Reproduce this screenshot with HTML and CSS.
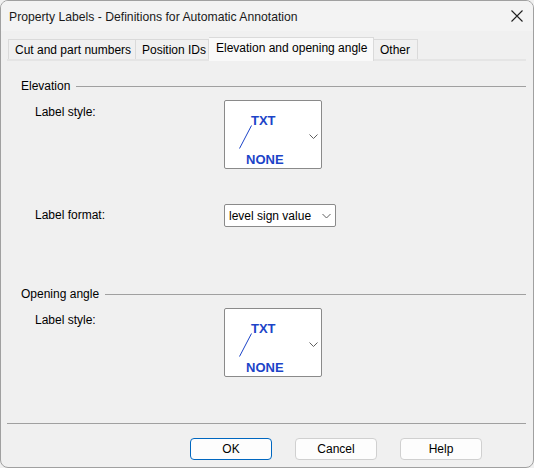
FILE: index.html
```html
<!DOCTYPE html>
<html>
<head>
<meta charset="utf-8">
<link rel="stylesheet" href="styles.css">
</head>
<body>
<div class="window">
  <div class="titlebar">
    <span class="title">Property Labels - Definitions for Automatic Annotation</span>
    <svg class="close" width="12" height="12" viewBox="0 0 12 12"><path d="M0.5 0.5 L11.5 11.5 M11.5 0.5 L0.5 11.5" stroke="#202020" stroke-width="1.1" fill="none"/></svg>
  </div>
  <div class="tabstrip">
    <div class="tab t1">Cut and part numbers</div>
    <div class="tab t2">Position IDs</div>
    <div class="tab t3 selected">Elevation and opening angle</div>
    <div class="tab t4">Other</div>
  </div>
  <div class="panel">
    <div class="group-head first"><span>Elevation</span><div class="rule"></div></div>
    <div class="row">
      <div class="label big">Label style:</div>
      <div class="combo-big">
        <svg width="96" height="67" viewBox="0 0 96 67">
          <text x="26" y="24" class="pv">TXT</text>
          <line x1="26.5" y1="24.5" x2="14.5" y2="47.5" stroke="#1c44c8" stroke-width="1"/>
          <text x="21" y="62.5" class="pv">NONE</text>
          <path d="M84.5 33.5 L88.5 37.5 L92.5 33.5" stroke="#606060" stroke-width="1" fill="none"/>
        </svg>
      </div>
    </div>
    <div class="row format">
      <div class="label">Label format:</div>
      <div class="combo-small">
        <span>level sign value</span>
        <svg width="9" height="6" viewBox="0 0 9 6"><path d="M0.5 1 L4.5 5 L8.5 1" stroke="#606060" stroke-width="1" fill="none"/></svg>
      </div>
    </div>
    <div class="group-head second"><span>Opening angle</span><div class="rule"></div></div>
    <div class="row">
      <div class="label big">Label style:</div>
      <div class="combo-big">
        <svg width="96" height="67" viewBox="0 0 96 67">
          <text x="26" y="24" class="pv">TXT</text>
          <line x1="26.5" y1="24.5" x2="14.5" y2="47.5" stroke="#1c44c8" stroke-width="1"/>
          <text x="21" y="62.5" class="pv">NONE</text>
          <path d="M84.5 33.5 L88.5 37.5 L92.5 33.5" stroke="#606060" stroke-width="1" fill="none"/>
        </svg>
      </div>
    </div>
  </div>
  <div class="footer">
    <div class="separator"></div>
    <div class="buttons">
      <div class="btn default">OK</div>
      <div class="btn">Cancel</div>
      <div class="btn">Help</div>
    </div>
  </div>
</div>
</body>
</html>
```
FILE: styles.css
```css
html, body {
  margin: 0;
  padding: 0;
  background: #f0f0f0;
}
.window {
  box-sizing: border-box;
  width: 534px;
  height: 468px;
  border: 1px solid #a0a0a0;
  border-radius: 8px;
  background: #f0f0f0;
  display: flex;
  flex-direction: column;
  overflow: hidden;
  font-family: "Liberation Sans", Arial, sans-serif;
  font-size: 12px;
  color: #000;
}
.titlebar {
  height: 30px;
  flex: none;
  display: flex;
  align-items: center;
  justify-content: space-between;
  padding: 0 10px 0 8px;
  background: #f3f3f3;
}
.title {
  color: #1a1a1a;
  font-size: 12.2px;
  margin-top: 1px;
}
.close {
  display: block;
}
.tabstrip {
  flex: none;
  display: flex;
  align-items: flex-end;
  margin: 6px 7px 0 6px;
  padding-left: 1px;
  border-bottom: 2px solid #e5e5e5;
  height: 22px;
}
.tab {
  box-sizing: border-box;
  height: 20px;
  line-height: 20px;
  border: 1px solid #dadada;
  border-bottom: none;
  border-left: none;
  padding: 0 6px;
  background: #f0f0f0;
  white-space: nowrap;
}
.tab.t1 {
  border-left: 1px solid #dadada;
  width: 128px;
}
.tab.t2 { width: 73px; }
.tab.t3 { width: 165px; }
.tab.t4 { width: 44px; }
.tab.selected {
  height: 24px;
  margin-bottom: -2px;
  line-height: 21px;
  background: #f9f9f9;
  border-left: none;
  padding-left: 7px;
}
.panel {
  display: flex;
  flex-direction: column;
  padding: 0 7px 0 20px;
}
.group-head {
  display: flex;
  align-items: center;
  height: 16px;
}
.group-head.first { margin-top: 17px; }
.group-head.second { margin-top: 59px; }
.group-head .rule {
  flex: 1;
  height: 1px;
  background: #a0a0a0;
  margin-left: 6px;
}
.row {
  display: flex;
  align-items: flex-start;
  margin-top: 6px;
  padding-left: 14px;
}
.row.format {
  margin-top: 35px;
  align-items: center;
}
.label {
  width: 189px;
  flex: none;
  line-height: 15px;
}
.label.big {
  padding-top: 5px;
}
.combo-big {
  box-sizing: border-box;
  width: 98px;
  height: 69px;
  border: 1px solid #8a8a8a;
  border-radius: 2px;
  background: #fff;
}
.combo-big svg { display: block; }
.pv {
  font-family: "Liberation Sans", Arial, sans-serif;
  font-weight: bold;
  font-size: 13px;
  fill: #1c44c8;
}
.combo-small {
  box-sizing: border-box;
  width: 112px;
  height: 23px;
  border: 1px solid #8a8a8a;
  border-radius: 2px;
  background: #fff;
  display: flex;
  align-items: center;
  justify-content: space-between;
  padding: 0 4px 0 4px;
}
.combo-small svg { display: block; }
.footer {
  margin-top: auto;
  display: flex;
  flex-direction: column;
  padding-bottom: 7px;
}
.separator {
  height: 1px;
  background: #a0a0a0;
  margin: 0 7px 0 6px;
}
.buttons {
  display: flex;
  justify-content: flex-end;
  gap: 23px;
  margin-top: 14px;
  padding-right: 51px;
}
.btn {
  box-sizing: border-box;
  width: 82px;
  height: 22px;
  border: 1px solid #d0d0d0;
  border-radius: 4px;
  background: #fdfdfd;
  text-align: center;
  line-height: 20px;
}
.btn.default {
  border-color: #0067c0;
}
```
